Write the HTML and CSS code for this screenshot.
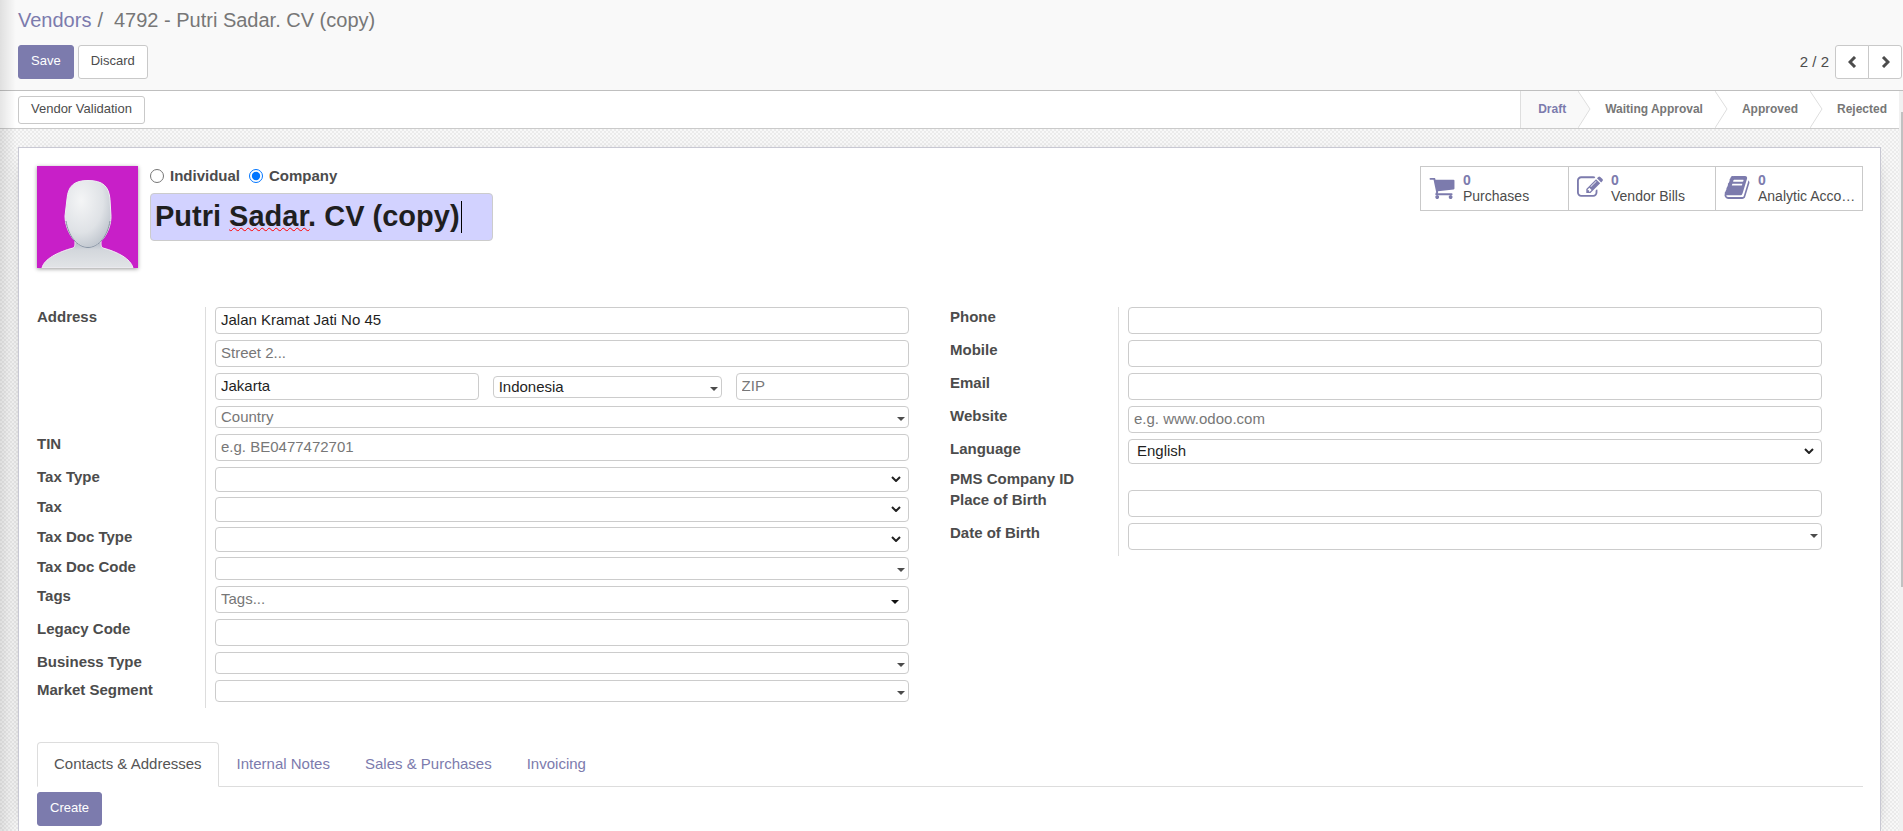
FILE: index.html
```html
<!DOCTYPE html>
<html lang="en">
<head>
<meta charset="utf-8">
<title>4792 - Putri Sadar. CV (copy)</title>
<link rel="stylesheet" href="styles.css">
</head>
<body>
<svg class="defs" aria-hidden="true">
  <symbol id="caret" viewBox="0 0 8 4"><path d="M0 0h8L4 4z" fill="currentColor"/></symbol>
  <symbol id="chevron" viewBox="0 0 10 6"><path d="M1 1l4 4 4-4" fill="none" stroke="currentColor" stroke-width="2"/></symbol>
</svg>
<div class="client">
  <header class="control-panel">
    <nav class="breadcrumb" aria-label="Breadcrumb"><a href="#">Vendors</a><span>/</span><span class="current">4792 - Putri Sadar. CV (copy)</span></nav>
    <div class="actions">
      <button class="btn primary" type="button">Save</button>
      <button class="btn" type="button">Discard</button>
      <div class="pager">
        <span class="count">2 / 2</span>
        <button class="btn page prev" type="button" aria-label="Previous"><svg width="9" height="12" viewBox="0 0 9 12"><path d="M7 1L2 6l5 5" fill="none" stroke="currentColor" stroke-width="3"/></svg></button>
        <button class="btn page next" type="button" aria-label="Next"><svg width="9" height="12" viewBox="0 0 9 12"><path d="M2 1l5 5-5 5" fill="none" stroke="currentColor" stroke-width="3"/></svg></button>
      </div>
    </div>
  </header>
  <div class="content">
    <main class="view">
      <div class="statusbar">
        <button class="btn small" type="button">Vendor Validation</button>
        <ol class="stages">
          <li class="stage active"><span>Draft</span><svg viewBox="0 0 13 37" preserveAspectRatio="none"><path class="fill" d="M0 0l12 18L0 37z"/><path class="edge" d="M0 0l12 18L0 37"/></svg></li>
          <li class="stage"><span>Waiting Approval</span><svg viewBox="0 0 13 37" preserveAspectRatio="none"><path class="edge" d="M0 0l12 18L0 37"/></svg></li>
          <li class="stage"><span>Approved</span><svg viewBox="0 0 13 37" preserveAspectRatio="none"><path class="edge" d="M0 0l12 18L0 37"/></svg></li>
          <li class="stage"><span>Rejected</span></li>
        </ol>
      </div>
      <div class="backdrop">
        <form class="sheet">
          <div class="head">
            <svg class="avatar" viewBox="0 0 101 102" role="img" aria-label="Vendor image">
              <defs>
                <radialGradient id="face" cx="0.35" cy="0.3" r="0.8"><stop offset="0" stop-color="#f4f5f6"/><stop offset="0.6" stop-color="#dfe2e6"/><stop offset="1" stop-color="#b9c0c9"/></radialGradient>
                <linearGradient id="body" x1="0" y1="0" x2="0" y2="1"><stop offset="0" stop-color="#aab3bf"/><stop offset="0.35" stop-color="#d3d7dc"/><stop offset="1" stop-color="#e2e4e7"/></linearGradient>
              </defs>
              <rect width="101" height="102" fill="#c81fc8"/>
              <path d="M5 102c2-9 16-16 31-20 2-1 2-3 2-8h26c0 5 0 7 2 8 15 4 28 11 30 20z" fill="url(#body)" stroke="#f3eef5"/>
              <path d="M51 14.500c15 0 21 6 22 19l1 17c0 15-11 31-23 31S28 65 28 50l2-17c1-13 7-18.500 21-18.500z" fill="url(#face)" stroke="#eef0f3"/>
              <path d="M29 55c2 14 11 26.500 22 26.500S71 69 73 55" fill="none" stroke="#8894a4"/>
            </svg>
            <div class="identity">
              <div class="kinds">
                <label><input type="radio" name="kind"><span>Individual</span></label>
                <label><input type="radio" name="kind" checked><span>Company</span></label>
              </div>
              <div class="name-box">
                <input class="name" type="text" aria-label="Name" value="Putri Sadar. CV (copy)">
                <span class="marks" aria-hidden="true"><span class="ghost">Putri </span><span class="ghost misspelt">Sadar</span><span class="ghost">. CV (copy)</span><span class="cursor"></span></span>
              </div>
            </div>
            <div class="stats">
              <button class="stat" type="button"><svg viewBox="0 0 1664 1536"><path d="M640 1408q0 52-38 90t-90 38-90-38-38-90 38-90 90-38 90 38 38 90zm896 0q0 52-38 90t-90 38-90-38-38-90 38-90 90-38 90 38 38 90zm128-1088v512q0 24-16.500 42.500T1607 896L563 1018q13 60 13 70 0 16-24 64h920q26 0 45 19t19 45-19 45-45 19H448q-26 0-45-19t-19-45q0-11 8-31.500t16-36 21.500-40T445 1079L268 256H64q-26 0-45-19T0 192t19-45 45-19h256q16 0 28.500 6.500T368 150t13 24.500 8 26 5.500 29.500 4.500 26h1201q26 0 45 19t19 45z"/></svg><span class="stat-text"><b>0</b><span>Purchases</span></span></button>
              <button class="stat" type="button"><svg viewBox="0 0 1792 1536"><path d="M888 1056l116-116-152-152-116 116v56h96v96h56zm440-720q-16-16-33 1L945 687q-17 17-1 33t33-1l350-350q17-17 1-33zm80 594v190q0 119-84.500 203.500T1120 1408H288q-119 0-203.500-84.500T0 1120V288Q0 169 84.500 84.500T288 0h832q63 0 117 25 15 7 18 23 3 17-9 29l-49 49q-14 14-32 8-23-6-45-6H288q-66 0-113 47t-47 113v832q0 66 47 113t113 47h832q66 0 113-47t47-113V994q0-13 9-22l64-64q15-15 35-7t20 29zm-96-738l288 288-672 672H640V864zm444 132l-92 92-288-288 92-92q28-28 68-28t68 28l152 152q28 28 28 68t-28 68z"/></svg><span class="stat-text"><b>0</b><span>Vendor Bills</span></span></button>
              <button class="stat" type="button"><svg viewBox="0 0 1664 1536"><path d="M1639 350q40 57 18 129l-275 906q-19 64-76.500 107.500T1183 1536H260q-77 0-148.500-53.500T12 1351q-24-67-2-127 0-4 3-27t4-37q1-8-3-21.500t-3-19.500q2-11 8-21t16.500-23.500T52 1051q23-38 45-91.500t30-91.500q3-10 .5-30t-.5-28q3-11 17-28t17-23q21-36 42-92t25-90q1-9-2.500-32t.5-28q4-13 22-30.500t22-22.500q19-26 42.500-84.500T340 283q1-8-3-25.500t-2-26.500q2-8 9-18t18-23 17-21q8-12 16.500-30.500t15-35 16-36 19.500-32T475.500 12t36-11.500T559 6l-1 3q38-9 51-9h761q74 0 114 56t18 130l-274 906q-36 119-71.500 153.500T1028 1280H159q-27 0-38 15-11 16-1 43 24 70 144 70h923q29 0 56-15.500t35-41.500l300-987q7-22 5-57 38 15 59 43zM575 352q-4 13 2 22.500t20 9.500h608q13 0 25.500-9.500T1247 352l21-64q4-13-2-22.500t-20-9.500H638q-13 0-25.500 9.500T596 288zm-83 256q-4 13 2 22.500t20 9.500h608q13 0 25.500-9.500T1164 608l21-64q4-13-2-22.500t-20-9.500H555q-13 0-25.500 9.500T513 544z"/></svg><span class="stat-text"><b>0</b><span>Analytic Acco…</span></span></button>
            </div>
          </div>

          <div class="groups">
            <div class="group">
              <div class="row"><label for="street">Address</label><div class="cell"><input id="street" type="text" value="Jalan Kramat Jati No 45"></div></div>
              <div class="row"><span></span><div class="cell"><input type="text" aria-label="Street 2" placeholder="Street 2..."></div></div>
              <div class="row"><span></span><div class="cell place">
                <input type="text" aria-label="City" value="Jakarta">
                <span class="pick short"><select aria-label="State"><option>Indonesia</option></select><svg class="caret"><use href="#caret"/></svg></span>
                <input type="text" aria-label="ZIP" placeholder="ZIP">
              </div></div>
              <div class="row"><span></span><div class="cell"><span class="pick short empty"><select aria-label="Country"><option>Country</option></select><svg class="caret"><use href="#caret"/></svg></span></div></div>
              <div class="row"><label for="tin">TIN</label><div class="cell"><input id="tin" type="text" placeholder="e.g. BE0477472701"></div></div>
              <div class="row tight"><label for="taxtype">Tax Type</label><div class="cell"><span class="pick list"><select id="taxtype"><option></option></select><svg class="chevron"><use href="#chevron"/></svg></span></div></div>
              <div class="row tight"><label for="tax">Tax</label><div class="cell"><span class="pick list"><select id="tax"><option></option></select><svg class="chevron"><use href="#chevron"/></svg></span></div></div>
              <div class="row tight"><label for="doctype">Tax Doc Type</label><div class="cell"><span class="pick list"><select id="doctype"><option></option></select><svg class="chevron"><use href="#chevron"/></svg></span></div></div>
              <div class="row"><label for="doccode">Tax Doc Code</label><div class="cell"><span class="pick short code"><select id="doccode"><option></option></select><svg class="caret"><use href="#caret"/></svg></span></div></div>
              <div class="row"><label for="tags">Tags</label><div class="cell"><span class="pick tags"><input id="tags" type="text" placeholder="Tags..."><svg class="caret"><use href="#caret"/></svg></span></div></div>
              <div class="row"><label for="legacy">Legacy Code</label><div class="cell"><input id="legacy" type="text"></div></div>
              <div class="row"><label for="business">Business Type</label><div class="cell"><span class="pick short"><select id="business"><option></option></select><svg class="caret"><use href="#caret"/></svg></span></div></div>
              <div class="row"><label for="market">Market Segment</label><div class="cell"><span class="pick short"><select id="market"><option></option></select><svg class="caret"><use href="#caret"/></svg></span></div></div>
            </div>
            <div class="group">
              <div class="row"><label for="phone">Phone</label><div class="cell"><input id="phone" type="tel"></div></div>
              <div class="row"><label for="mobile">Mobile</label><div class="cell"><input id="mobile" type="tel"></div></div>
              <div class="row"><label for="email">Email</label><div class="cell"><input id="email" type="email"></div></div>
              <div class="row"><label for="website">Website</label><div class="cell"><input id="website" type="text" placeholder="e.g. www.odoo.com"></div></div>
              <div class="row tight"><label for="lang">Language</label><div class="cell"><span class="pick list"><select id="lang"><option>English</option></select><svg class="chevron"><use href="#chevron"/></svg></span></div></div>
              <div class="row readonly"><span class="label">PMS Company ID</span><div class="cell"></div></div>
              <div class="row"><label for="birthplace">Place of Birth</label><div class="cell"><input id="birthplace" type="text"></div></div>
              <div class="row"><label for="birthdate">Date of Birth</label><div class="cell"><span class="pick"><input id="birthdate" type="text"><svg class="caret"><use href="#caret"/></svg></span></div></div>
            </div>
          </div>

          <nav class="tabs">
            <a class="tab active" href="#">Contacts &amp; Addresses</a>
            <a class="tab" href="#">Internal Notes</a>
            <a class="tab" href="#">Sales &amp; Purchases</a>
            <a class="tab" href="#">Invoicing</a>
          </nav>
          <div class="pane"><button class="btn primary" type="button">Create</button></div>
        </form>
      </div>
    </main>
    <div class="scroll-track" aria-hidden="true"><div class="scroll-thumb"></div></div>
  </div>
</div>
</body>
</html>
```
FILE: styles.css
```css
* { box-sizing: border-box; }

body {
  margin: 0;
  font: 15px/20px "Liberation Sans", Arial, sans-serif;
  color: #4c4c4c;
  background: #fff;
}

a { color: #7c7bad; text-decoration: none; }
input, select, button { font: inherit; color: inherit; margin: 0; }
.defs { display: none; }

.client {
  position: relative;
  display: flex;
  flex-direction: column;
  height: 100vh;
  overflow: hidden;
}

.client::before {
  content: "";
  position: absolute;
  z-index: 1;
  top: 0;
  bottom: 0;
  left: 0;
  width: 16px;
  background: linear-gradient(to right, rgba(0, 0, 0, 0.1), rgba(0, 0, 0, 0));
  pointer-events: none;
}

/* control panel */
.control-panel {
  flex: none;
  padding: 8px 1px 11px 18px;
  background: #f9f9f9;
  border-bottom: 1px solid #bfbfbf;
}

.breadcrumb {
  display: flex;
  gap: 6px;
  margin-bottom: 13px;
  font-size: 20px;
  line-height: 24px;
  color: #777;
}

.breadcrumb .current { padding-left: 5px; }
.actions { display: flex; gap: 4px; }

.btn {
  height: 34px;
  padding: 0 12px 2px;
  border: 1px solid #c9c9c9;
  border-radius: 3px;
  background: #fff;
  font-size: 13px;
  line-height: 18px;
  white-space: nowrap;
}

.btn.primary { border-color: #7c7bad; background: #7c7bad; color: #fff; }
.btn.small { height: 28px; }

.pager { display: flex; align-items: center; margin-left: auto; }
.pager .count { margin-right: 6px; }
.btn.page { display: grid; place-items: center; width: 34px; padding: 0; }
.btn.prev { border-radius: 3px 0 0 3px; }
.btn.next { margin-left: -1px; border-radius: 0 3px 3px 0; }

/* scrolling area */
.content { display: flex; flex: 1; min-height: 0; }
.view { display: flex; flex: 1; flex-direction: column; min-width: 0; overflow: hidden; }

.scroll-track { width: 4px; padding: 21px 0 0 2px; background: #f1f1f1; }
.scroll-thumb { height: 66%; background: #c1c1c1; }

/* status bar */
.statusbar {
  display: flex;
  flex: none;
  align-items: center;
  justify-content: space-between;
  height: 38px;
  padding-left: 18px;
  border-bottom: 1px solid #cacaca;
}

.stages {
  display: flex;
  align-self: stretch;
  margin: 0;
  padding: 0;
  border-left: 1px solid #dedede;
  list-style: none;
  font-size: 12px;
  font-weight: bold;
  color: #777;
}

.stage { display: flex; align-items: center; }
.stage span { padding: 0 12px 2px 14px; }
.stage svg { align-self: stretch; width: 13px; height: 37px; }
.stage .edge { fill: none; stroke: #dedede; }
.stage .fill { fill: #f9f9f9; }
.stage.active span { display: flex; align-items: center; align-self: stretch; padding-left: 17px; background: #f9f9f9; color: #7c7bad; }

/* sheet */
.backdrop {
  flex: 1;
  padding: 18px 18px 0;
  background: repeating-conic-gradient(#ebebeb 0 25%, #f8f8f8 0 50%) 0 0 / 4px 4px;
}

.sheet {
  min-height: 100%;
  padding: 18px 17px 0 18px;
  border: 1px solid #c8c8d3;
  background: #fff;
  box-shadow: 0 5px 20px -15px #000;
}

.head { display: flex; align-items: flex-start; margin-bottom: 39px; }
.avatar { flex: none; width: 101px; height: 102px; box-shadow: 0 1px 4px rgba(0, 0, 0, 0.4); }
.identity { margin-left: 12px; }

.kinds { display: flex; gap: 9px; font-weight: bold; }
.kinds label { display: flex; align-items: center; gap: 6px; }
.kinds input { width: 14px; height: 14px; accent-color: #0075ff; }

.name-box { position: relative; margin-top: 7px; }
.name, .marks { padding: 0 4px 2px; font-size: 29px; font-weight: bold; line-height: 44px; }

.name {
  width: 343px;
  height: 48px;
  border: 1px solid #ccc;
  border-radius: 4px;
  background: #d2d2ff;
  color: #1f1f1f;
}

.marks {
  position: absolute;
  inset: 1px 0 0 1px;
  display: flex;
  align-items: center;
  white-space: pre;
  pointer-events: none;
}

.ghost { color: transparent; }
.misspelt { text-decoration: underline wavy #f00 1px; text-underline-offset: 0; text-decoration-skip-ink: none; }
.cursor { width: 1px; height: 32px; background: #000; }

.stats { display: flex; margin-left: auto; border: 1px solid #c9c9c9; }

.stat {
  display: flex;
  align-items: center;
  gap: 8px;
  width: 147px;
  height: 43px;
  padding: 0 4px 2px 8px;
  border: 0;
  background: #fff;
  text-align: left;
}

.stat + .stat { border-left: 1px solid #c9c9c9; }
.stat svg { flex: none; width: 26px; height: 23px; fill: #7c7bad; }
.stat-text { display: flex; flex-direction: column; min-width: 0; font-size: 14px; line-height: 16px; white-space: nowrap; }
.stat-text b { color: #7c7bad; }

/* field groups */
.groups { display: grid; grid-template-columns: 1fr 1fr; align-items: start; }
.group { padding-right: 41px; }
.row { display: grid; grid-template-columns: 168px 1fr; }
.row label, .label { font-weight: bold; }
.cell { min-width: 0; padding: 0 0 6px 9px; border-left: 1px solid #ddd; }
.tight .cell { padding-bottom: 5px; }
.readonly .cell { min-height: 21px; }

.cell input, .cell select {
  display: block;
  width: 100%;
  height: 27px;
  padding: 0 5px 2px;
  border: 1px solid #ccc;
  border-radius: 4px;
  background: #fff;
  color: #1f1f1f;
}

.cell ::placeholder, .cell .empty select { color: #777; }
.cell select { appearance: none; }
.place { display: grid; grid-template-columns: 38fr 33fr 25fr; align-items: center; gap: 14px; }

.pick { position: relative; display: block; }
.cell .short select { height: 22px; padding-bottom: 0; }
.cell .code select { height: 23px; }
.cell .list select { height: 25px; padding-left: 8px; }
.caret, .chevron { position: absolute; pointer-events: none; }
.caret { top: 11px; right: 4px; width: 8px; height: 4px; }
.tags .caret { top: 14px; right: 10px; color: #111; }
.chevron { top: 9px; right: 8px; width: 10px; height: 6px; color: #222; }

/* notebook */
.tabs { display: flex; gap: 1px; margin-top: 34px; border-bottom: 1px solid #ddd; }

.tab {
  margin-bottom: -1px;
  padding: 11px 16px 12px;
  border: 1px solid transparent;
  border-radius: 4px 4px 0 0;
}

.tab.active { border-color: #ddd #ddd #fff; background: #fff; color: #555; }
.pane { padding: 5px 0; }
```
